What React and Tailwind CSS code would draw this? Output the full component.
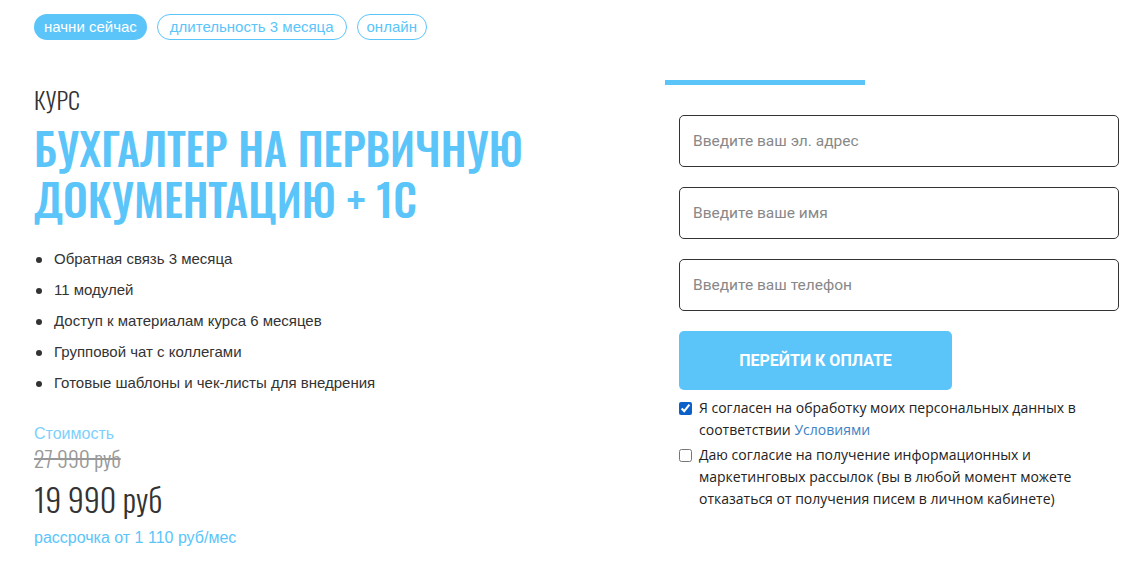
import { useState } from 'react'

const features = [
  'Обратная связь 3 месяца',
  '11 модулей',
  'Доступ к материалам курса 6 месяцев',
  'Групповой чат с коллегами',
  'Готовые шаблоны и чек-листы для внедрения',
]

const narrow = "font-['Oswald','Liberation_Sans_Narrow','DejaVu_Sans_Condensed',sans-serif]"

export default function App() {
  const [agree, setAgree] = useState(true)
  const [mailing, setMailing] = useState(false)

  return (
    <div className="w-[1138px] h-[570px] bg-white overflow-hidden font-['Liberation_Sans',Arial,sans-serif]">
      {/* Tags */}
      <div className="flex gap-[10px] pl-[34px] pt-[14px]">
        <span className="h-[26px] px-[10px] rounded-full bg-[#5bc5fa] text-white text-[15px] leading-[26px]">начни сейчас</span>
        <span className="h-[26px] px-[12px] rounded-full border border-[#5bc5fa] text-[#5bc5fa] text-[15px] leading-[24px]">длительность 3 месяца</span>
        <span className="h-[26px] px-[9px] rounded-full border border-[#5bc5fa] text-[#5bc5fa] text-[15px] leading-[24px]">онлайн</span>
      </div>

      <div className="flex mt-[40px]">
        {/* Left column */}
        <div className="w-[665px] pl-[34px]">
          <div className={`${narrow} font-light text-[24px] leading-[30px] text-[#333] mt-[4px]`}>КУРС</div>
          <h1 className={`${narrow} font-medium text-[44px] leading-[51px] text-[#5bc5fa] mt-[8px]`}>
            БУХГАЛТЕР НА ПЕРВИЧНУЮ<br />ДОКУМЕНТАЦИЮ + 1С
          </h1>
          <ul className="mt-[20px] flex flex-col">
            {features.map(f => (
              <li key={f} className="flex items-center h-[31px] text-[15px] text-[#333]">
                <span className="w-[6px] h-[6px] rounded-full bg-[#333] ml-[2px] mr-[12px]" />
                {f}
              </li>
            ))}
          </ul>
          <div className="mt-[26px] text-[16px] leading-[18px] text-[#7dd0fa]">Стоимость</div>
          <div className={`${narrow} font-light text-[21.5px] leading-[24px] text-[#999] line-through mt-[3px]`}>27 990 руб</div>
          <div className={`${narrow} font-light text-[32px] leading-[40px] text-[#333] mt-[9px]`}>19 990 руб</div>
          <div className="text-[16px] leading-[18px] text-[#5bc5fa] mt-[10px]">рассрочка от 1 110 руб/мес</div>
        </div>

        {/* Right column */}
        <div className="w-[454px]">
          <div className="w-[200px] h-[5px] bg-[#5bc5fa]" />
          <div className="pl-[14px] mt-[30px] flex flex-col gap-[20px] font-['Roboto',sans-serif]">
            {['Введите ваш эл. адрес', 'Введите ваше имя', 'Введите ваш телефон'].map(p => (
              <input
                key={p}
                placeholder={p}
                className="w-[440px] h-[52px] border border-[#333] rounded-[5px] px-[13px] text-[15.5px] outline-none placeholder-[#888]"
              />
            ))}
          </div>
          <div className="pl-[14px] mt-[20px]">
            <button className="w-[273px] h-[59px] rounded-[5px] bg-[#5bc5fa] text-white font-['Roboto',sans-serif] font-bold text-[16px]">
              ПЕРЕЙТИ К ОПЛАТЕ
            </button>
            <div className="mt-[7px] flex flex-col gap-[3px] font-['Open_Sans',sans-serif] text-[14px] leading-[22px] text-[#222]">
              <label className="flex items-start gap-[7px]">
                <input type="checkbox" checked={agree} onChange={e => setAgree(e.target.checked)} className="mt-[5px] w-[13px] h-[13px] accent-[#0b61c9]" />
                <span>Я согласен на обработку моих персональных данных в<br />соответствии <a className="text-[#3d82c4]">Условиями</a></span>
              </label>
              <label className="flex items-start gap-[7px]">
                <input type="checkbox" checked={mailing} onChange={e => setMailing(e.target.checked)} className="mt-[5px] w-[13px] h-[13px]" />
                <span>Даю согласие на получение информационных и<br />маркетинговых рассылок (вы в любой момент можете<br />отказаться от получения писем в личном кабинете)</span>
              </label>
            </div>
          </div>
        </div>
      </div>
    </div>
  )
}
